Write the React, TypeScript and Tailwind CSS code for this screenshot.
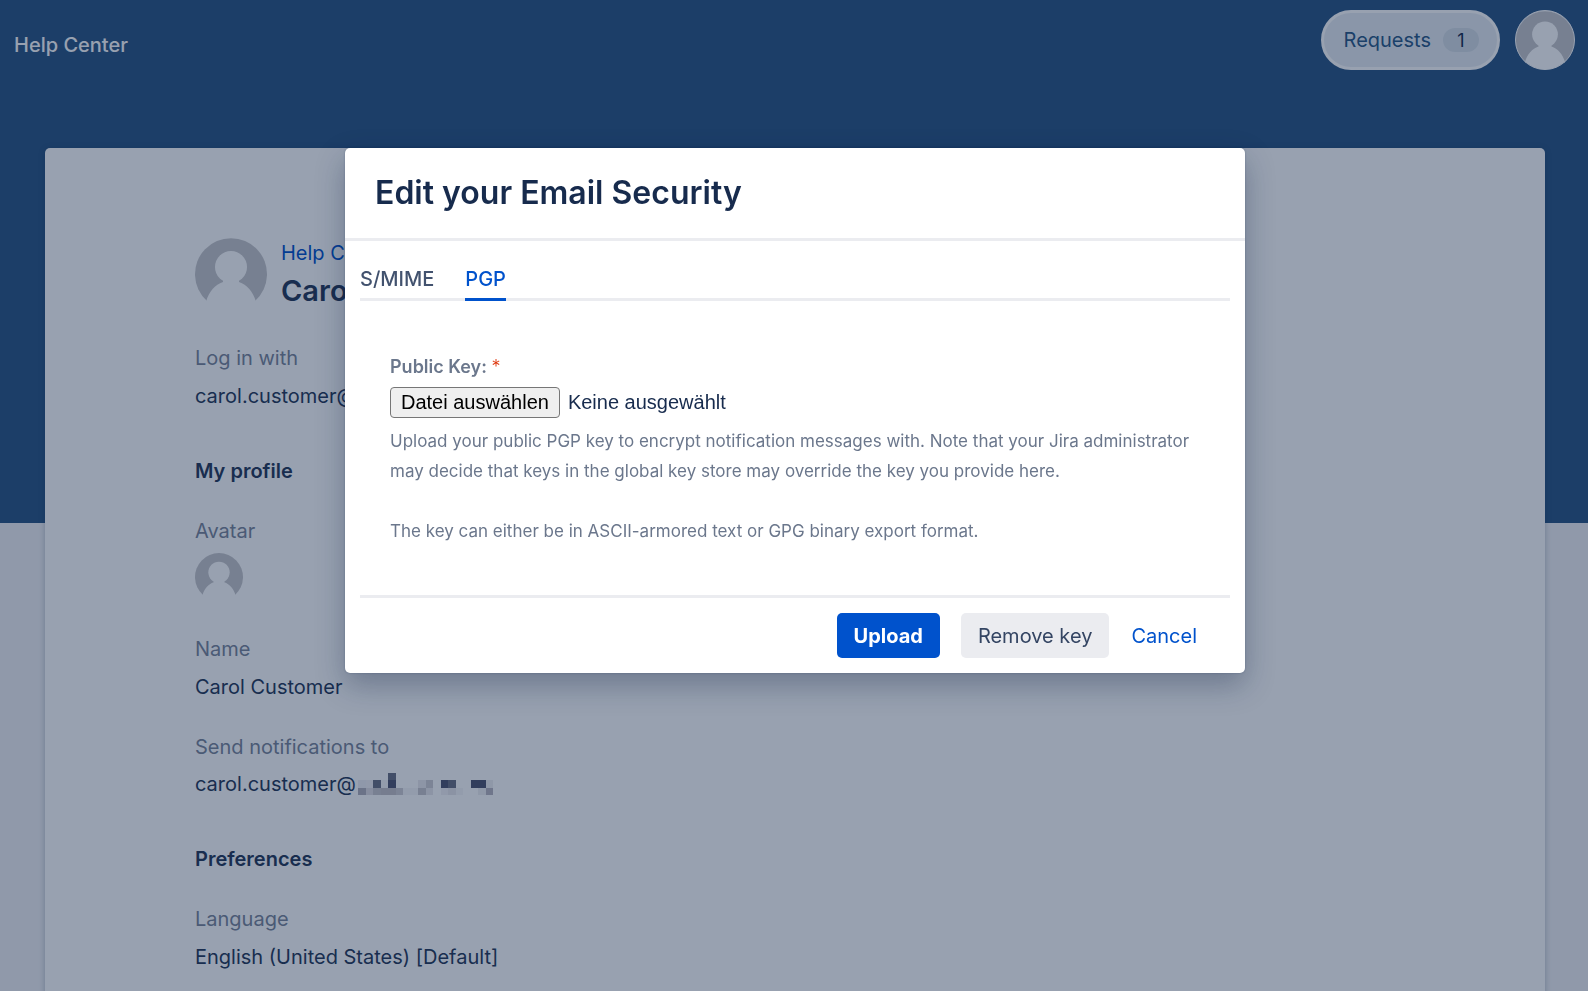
import { useRef, useState } from "react";

const MOSAIC_FILLS = [
  { col: 4, row: 0, fill: "#6b7084" },
  { col: 1, row: 1, fill: "#f3f2f4" },
  { col: 0, row: 1, fill: "#f0f0f4" },
  { col: 2, row: 1, fill: "#6b7084" },
  { col: 3, row: 1, fill: "#f6f6f8" },
  { col: 4, row: 1, fill: "#505571" },
  { col: 8, row: 1, fill: "#eceaee" },
  { col: 9, row: 1, fill: "#cfcdd3" },
  { col: 11, row: 1, fill: "#505571" },
  { col: 12, row: 1, fill: "#6b7084" },
  { col: 15, row: 1, fill: "#505571" },
  { col: 16, row: 1, fill: "#505571" },
  { col: 17, row: 1, fill: "#f0eff2" },
  { col: 0, row: 2, fill: "#b2b0bb" },
  { col: 1, row: 2, fill: "#e2dfe3" },
  { col: 2, row: 2, fill: "#c9c6cc" },
  { col: 3, row: 2, fill: "#c5c2c7" },
  { col: 4, row: 2, fill: "#c5c2c7" },
  { col: 5, row: 2, fill: "#cfcdd3" },
  { col: 6, row: 2, fill: "#f6f6f8" },
  { col: 7, row: 2, fill: "#f6f6f8" },
  { col: 8, row: 2, fill: "#c9c6cc" },
  { col: 9, row: 2, fill: "#ebe9ec" },
  { col: 11, row: 2, fill: "#f3f2f4" },
  { col: 12, row: 2, fill: "#e9e7eb" },
  { col: 13, row: 2, fill: "#f6f6f8" },
  { col: 16, row: 2, fill: "#f0eff2" },
  { col: 17, row: 2, fill: "#b8b6c0" },
];

function Person({ className }: { className: string }) {
  return (
    <svg viewBox="0 0 72 72" className={className} aria-hidden="true">
      <path d="M12 63a36 36 0 1 1 48 0z" fill="#c7c7ca" />
      <circle cx="36" cy="29" r="16" fill="#fff" />
      <path d="M28 41h16v3c8 3 14 9 17 20H11c3-11 9-17 17-20z" fill="#fff" />
    </svg>
  );
}

function MaskedDomain() {
  return (
    <svg
      viewBox="0 0 18 3"
      preserveAspectRatio="none"
      className="ml-0.5 h-[22px] w-[135px]"
      shapeRendering="crispEdges"
      aria-hidden="true"
    >
      {MOSAIC_FILLS.map((cell) => (
        <rect key={`${cell.col}-${cell.row}`} x={cell.col} y={cell.row} width="1" height="1" fill={cell.fill} />
      ))}
    </svg>
  );
}

function Header() {
  return (
    <header className="flex items-start justify-between pt-[10px] pr-[13px] pl-[14px]">
      <a href="#" className="mt-5 text-[20px] leading-[30px] font-medium text-white">
        Help Center
      </a>
      <div className="flex items-center gap-[15px]">
        <button
          type="button"
          className="flex h-[60px] items-center gap-3 rounded-full border-3 border-white bg-[#e7edf3] pr-[18px] pl-5 text-[20px] text-[#2a5885]"
        >
          Requests
          <span className="flex h-6 w-9 items-center justify-center rounded-full bg-[#d4dde6] text-[18px] text-[#172b4d]">
            1
          </span>
        </button>
        <button type="button" aria-label="Account" className="size-[60px] rounded-full border border-white bg-white">
          <Person className="size-full" />
        </button>
      </div>
    </header>
  );
}

function Profile() {
  return (
    <main className="min-h-[900px] rounded-[5px] bg-white px-[150px] pt-[90px] text-[20px] leading-[30px] text-[#253858] shadow-[0_1px_6px_rgba(9,30,66,0.25)]">
      <div className="flex gap-[14px]">
        <Person className="size-[72px]" />
        <div>
          <a href="#" className="block text-[#0052cc]">
            Help Center
          </a>
          <h1 className="mt-1 text-[29px] leading-[38px] font-semibold">Carol Customer</h1>
        </div>
      </div>

      <dl className="mt-[33px]">
        <dt className="text-[#7a869a]">Log in with</dt>
        <dd className="mt-2 flex items-center">
          carol.customer@
          <MaskedDomain />
        </dd>
      </dl>

      <h2 className="mt-[45px] font-semibold">My profile</h2>
      <dl className="mt-[30px]">
        <dt className="text-[#7a869a]">Avatar</dt>
        <dd className="mt-[7px]">
          <Person className="size-[48px]" />
        </dd>
        <dt className="mt-[33px] text-[#7a869a]">Name</dt>
        <dd className="mt-2">Carol Customer</dd>
        <dt className="mt-[30px] text-[#7a869a]">Send notifications to</dt>
        <dd className="mt-[7px] flex items-center">
          carol.customer@
          <MaskedDomain />
        </dd>
      </dl>

      <h2 className="mt-[45px] font-semibold">Preferences</h2>
      <dl className="mt-[30px]">
        <dt className="text-[#7a869a]">Language</dt>
        <dd className="mt-2">English (United States) [Default]</dd>
      </dl>
    </main>
  );
}

function SecurityDialog() {
  const fileInput = useRef<HTMLInputElement>(null);
  const [fileName, setFileName] = useState("");

  return (
    <div
      role="dialog"
      aria-modal="true"
      aria-labelledby="dialog-title"
      className="w-[900px] max-w-full rounded-[5px] bg-white px-[15px] text-[20px] text-[#172b4d] shadow-[0_12px_30px_rgba(9,30,66,0.31),0_0_2px_rgba(9,30,66,0.31)]"
    >
      <div className="-mx-[15px] border-b-3 border-[#ebecf0] px-[30px] py-[25px]">
        <h2 id="dialog-title" className="text-[32px] leading-[40px] font-semibold">
          Edit your Email Security
        </h2>
      </div>

      <div role="tablist" className="mt-[23px] flex gap-[31px] border-b-3 border-[#ebecf0] leading-[30px] font-medium">
        <button type="button" role="tab" aria-selected="false" className="pb-1 text-[#42526e]">
          S/MIME
        </button>
        <button
          type="button"
          role="tab"
          aria-selected="true"
          className="-mb-[3px] border-b-3 border-[#0052cc] pb-1 text-[#0052cc]"
        >
          PGP
        </button>
      </div>

      <form onSubmit={(e) => e.preventDefault()}>
        <div className="px-[30px] pt-[51px] pb-[49px]">
          <label htmlFor="public-key" className="block text-[18px] leading-[30px] font-semibold text-[#6b778c]">
            Public Key: <span className="font-light text-[#de350b]">*</span>
          </label>
          <div className="mt-[5px] flex items-center gap-2 font-['Liberation_Sans',Arial,sans-serif] text-[20px] leading-[29px]">
            <input
              id="public-key"
              ref={fileInput}
              type="file"
              required
              className="sr-only"
              onChange={(e) => setFileName(e.target.files?.[0]?.name ?? "")}
            />
            <button
              type="button"
              onClick={() => fileInput.current?.click()}
              className="h-[31px] rounded-[4px] border border-[#767676] bg-[#efefef] px-[10px] text-black"
            >
              Datei auswählen
            </button>
            <span>{fileName || "Keine ausgewählt"}</span>
          </div>
          <p className="mt-2 text-[17px] leading-[30px] text-[#6b778c]">
            Upload your public PGP key to encrypt notification messages with. Note that your Jira administrator may
            decide that keys in the global key store may override the key you provide here.
          </p>
          <p className="mt-[30px] text-[17px] leading-[30px] text-[#6b778c]">
            The key can either be in ASCII-armored text or GPG binary export format.
          </p>
        </div>

        <div className="flex items-center justify-end border-t-3 border-[#ebecf0] py-[15px] pr-4">
          <button type="submit" className="h-[45px] rounded-[5px] bg-[#0052cc] px-[17px] font-bold text-white">
            Upload
          </button>
          <button type="button" className="ml-[21px] h-[45px] rounded-[5px] bg-[#ebecf0] px-[17px] text-[#344563]">
            Remove key
          </button>
          <button type="button" className="ml-[5px] h-[45px] px-[17px] text-[#0052cc]">
            Cancel
          </button>
        </div>
      </form>
    </div>
  );
}

export default function App() {
  return (
    <div className="h-screen overflow-hidden bg-[#f1f2f5] font-['Inter','Liberation_Sans',sans-serif]">
      <div className="h-[523px] bg-[#2a5583]">
        <Header />
        <div className="pt-[78px] pr-[43px] pl-[45px]">
          <Profile />
        </div>
      </div>

      {/* Blanket and dialog */}
      <div className="fixed inset-0 flex items-start justify-center bg-[rgba(9,30,66,0.42)] pt-[148px] pl-0.5">
        <SecurityDialog />
      </div>
    </div>
  );
}
